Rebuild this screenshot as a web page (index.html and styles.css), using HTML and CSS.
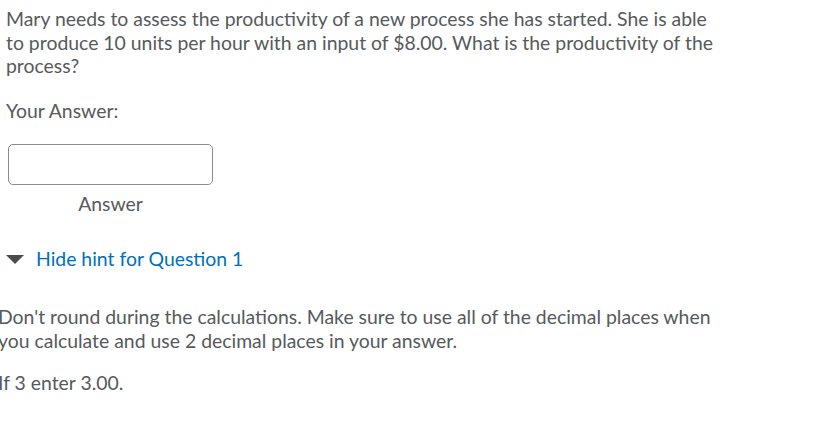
FILE: index.html
```html
<!DOCTYPE html>
<html lang="en">
<head>
<meta charset="utf-8">
<title>Question</title>
<link rel="stylesheet" href="styles.css">
</head>
<body>
<div class="page">
  <p class="question">Mary needs to assess the productivity of a new process she has started. She is able to produce 10 units per hour with an input of $8.00. What is the productivity of the process?</p>
  <p class="label">Your Answer:</p>
  <div class="answer">
    <input class="answer-input" type="text" aria-label="Answer">
    <div class="answer-caption">Answer</div>
  </div>
  <div class="hint-toggle">
    <span class="caret"></span>
    <a class="hint-link" href="#">Hide hint for Question 1</a>
  </div>
  <div class="hint">
    <p class="hint-text">Don't round during the calculations. Make sure to use all of the decimal places when you calculate and use 2 decimal places in your answer.</p>
    <p class="hint-text">If 3 enter 3.00.</p>
  </div>
</div>
</body>
</html>
```
FILE: styles.css
```css
html, body {
  margin: 0;
  padding: 0;
  background: #ffffff;
}
body {
  font-family: Lato, "Open Sans", sans-serif;
  font-size: 19.4px;
  line-height: 23.5px;
  color: #565a5c;
}
.page {
  padding: 7px 0 0 6px;
  width: 715px;
}
.question {
  margin: 0;
}
.label {
  margin: 21px 0 0 0;
}
.answer {
  margin: 22px 0 0 2px;
  width: 205px;
  display: flex;
  flex-direction: column;
}
.answer-input {
  box-sizing: border-box;
  width: 205px;
  height: 41px;
  margin: 0;
  border: 1px solid #868c8f;
  border-radius: 5px;
  background: #fff;
  font: inherit;
}
.answer-caption {
  margin-top: 7px;
  text-align: center;
}
.hint-toggle {
  margin-top: 31px;
  display: flex;
  align-items: center;
  gap: 12px;
}
.caret {
  width: 0;
  height: 0;
  border-left: 9px solid transparent;
  border-right: 9px solid transparent;
  border-top: 9px solid #494c4e;
  margin-top: 3px;
}
.hint-link {
  color: #006fbf;
  text-decoration: none;
}
.hint {
  margin: 35px 0 0 -8px;
}
.hint-text {
  margin: 0 0 19px 0;
}
```
